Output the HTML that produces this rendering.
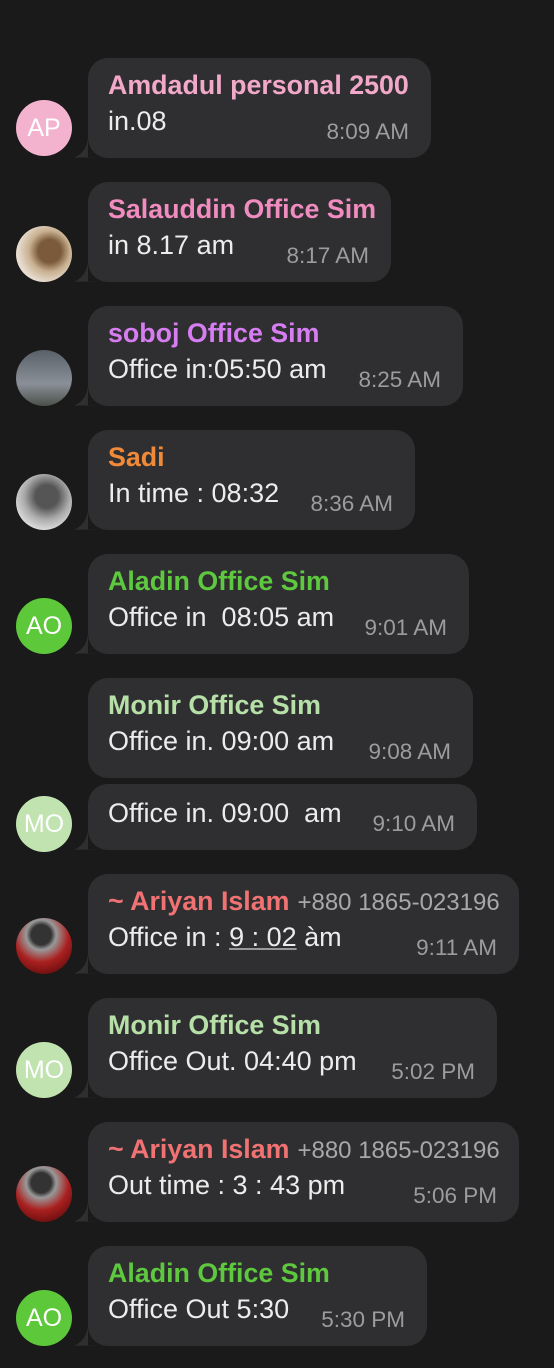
<!DOCTYPE html>
<html><head><meta charset="utf-8"><style>
body{margin:0;width:554px;height:1368px;background:#1a1a1a;font-family:"Liberation Sans",sans-serif;position:relative;overflow:hidden}
.b{position:absolute;left:88px;background:#2f2f31;border-radius:20px}
.t{position:absolute;left:-14px;bottom:0}
.n{position:absolute;left:20px;top:12px;font-size:26.8px;font-weight:bold;white-space:nowrap;line-height:30px}
.m{position:absolute;left:20px;font-size:27px;color:#ececec;white-space:nowrap;line-height:30px}
.tm{position:absolute;right:22px;font-size:22.5px;color:#9c9c9e;white-space:nowrap;line-height:24px}
.ph{font-weight:normal;color:#a8a8aa;font-size:24px;margin-left:8px}
.a{position:absolute;left:16px;width:56px;height:56px;border-radius:50%;color:#fff;font-size:25px;text-align:center;line-height:56px}
</style></head><body>
<svg width="0" height="0" style="position:absolute"><defs><path id="tl" d="M14 0 L14 20 L26 20 C18 20 8 19 0 20 C8 16 13 10 14 0Z"/></defs></svg>

<div class="b" style="top:58px;width:343px;height:100px"><svg class="t" width="26" height="20" viewBox="0 0 26 20"><use href="#tl" fill="#2f2f31"/></svg>
<div class="n" style="color:#f2a9c9">Amdadul personal 2500</div><div class="m" style="top:48px">in.08</div><div class="tm" style="top:62px">8:09 AM</div></div>
<div class="a" style="top:100px;background:#f3b2cd">AP</div>

<div class="b" style="top:182px;width:303px;height:100px"><svg class="t" width="26" height="20" viewBox="0 0 26 20"><use href="#tl" fill="#2f2f31"/></svg>
<div class="n" style="color:#f08cc0">Salauddin Office Sim</div><div class="m" style="top:48px">in 8.17 am</div><div class="tm" style="top:62px">8:17 AM</div></div>
<div class="a" style="top:226px;background:radial-gradient(circle at 60% 45%,#7a5a3a 0 25%,#c8b090 45%,#e8ddd0 70%)"></div>

<div class="b" style="top:306px;width:375px;height:100px"><svg class="t" width="26" height="20" viewBox="0 0 26 20"><use href="#tl" fill="#2f2f31"/></svg>
<div class="n" style="color:#d77df2">soboj Office Sim</div><div class="m" style="top:48px">Office in:05:50 am</div><div class="tm" style="top:62px">8:25 AM</div></div>
<div class="a" style="top:350px;background:linear-gradient(#5a6068,#8a9098 60%,#4a5048)"></div>

<div class="b" style="top:430px;width:327px;height:100px"><svg class="t" width="26" height="20" viewBox="0 0 26 20"><use href="#tl" fill="#2f2f31"/></svg>
<div class="n" style="color:#f18a38">Sadi</div><div class="m" style="top:48px">In time : 08:32</div><div class="tm" style="top:62px">8:36 AM</div></div>
<div class="a" style="top:474px;background:radial-gradient(circle at 55% 40%,#555 0 25%,#aaa 50%,#ddd 75%)"></div>

<div class="b" style="top:554px;width:381px;height:100px"><svg class="t" width="26" height="20" viewBox="0 0 26 20"><use href="#tl" fill="#2f2f31"/></svg>
<div class="n" style="color:#5ec83e">Aladin Office Sim</div><div class="m" style="top:48px">Office in&nbsp; 08:05 am</div><div class="tm" style="top:62px">9:01 AM</div></div>
<div class="a" style="top:598px;background:#5cc83a">AO</div>

<div class="b" style="top:678px;width:385px;height:100px">
<div class="n" style="color:#b6e0a8">Monir Office Sim</div><div class="m" style="top:48px">Office in. 09:00 am</div><div class="tm" style="top:62px">9:08 AM</div></div>

<div class="b" style="top:784px;width:389px;height:66px"><svg class="t" width="26" height="20" viewBox="0 0 26 20"><use href="#tl" fill="#2f2f31"/></svg>
<div class="m" style="top:14px">Office in. 09:00&nbsp; am</div><div class="tm" style="top:28px">9:10 AM</div></div>
<div class="a" style="top:796px;background:#c0e3b0">MO</div>

<div class="b" style="top:874px;width:431px;height:100px"><svg class="t" width="26" height="20" viewBox="0 0 26 20"><use href="#tl" fill="#2f2f31"/></svg>
<div class="n" style="color:#f07272">~ Ariyan Islam<span class="ph">+880 1865-023196</span></div><div class="m" style="top:48px">Office in : <span style="text-decoration:underline;text-decoration-color:#999">9 : 02</span> àm</div><div class="tm" style="top:62px">9:11 AM</div></div>
<div class="a" style="top:918px;background:radial-gradient(circle at 45% 30%,#333 0 20%,#999 30%,#aa2020 55%,#701010 80%)"></div>

<div class="b" style="top:998px;width:409px;height:100px"><svg class="t" width="26" height="20" viewBox="0 0 26 20"><use href="#tl" fill="#2f2f31"/></svg>
<div class="n" style="color:#b6e0a8">Monir Office Sim</div><div class="m" style="top:48px">Office Out. 04:40 pm</div><div class="tm" style="top:62px">5:02 PM</div></div>
<div class="a" style="top:1042px;background:#c0e3b0">MO</div>

<div class="b" style="top:1122px;width:431px;height:100px"><svg class="t" width="26" height="20" viewBox="0 0 26 20"><use href="#tl" fill="#2f2f31"/></svg>
<div class="n" style="color:#f07272">~ Ariyan Islam<span class="ph">+880 1865-023196</span></div><div class="m" style="top:48px">Out time : 3 : 43 pm</div><div class="tm" style="top:62px">5:06 PM</div></div>
<div class="a" style="top:1166px;background:radial-gradient(circle at 45% 30%,#333 0 20%,#999 30%,#aa2020 55%,#701010 80%)"></div>

<div class="b" style="top:1246px;width:339px;height:100px"><svg class="t" width="26" height="20" viewBox="0 0 26 20"><use href="#tl" fill="#2f2f31"/></svg>
<div class="n" style="color:#5ec83e">Aladin Office Sim</div><div class="m" style="top:48px">Office Out 5:30</div><div class="tm" style="top:62px">5:30 PM</div></div>
<div class="a" style="top:1290px;background:#5cc83a">AO</div>
</body></html>
